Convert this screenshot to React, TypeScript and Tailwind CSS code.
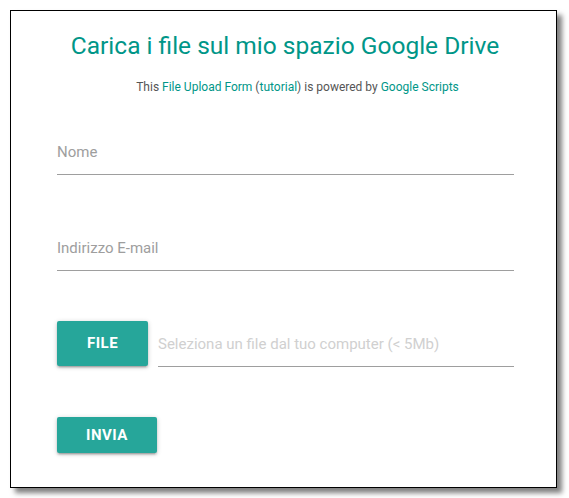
import React from "react";

const App: React.FC = () => {
  const handleSubmit = (e: React.FormEvent) => {
    e.preventDefault();
  };

  return (
    <div className="w-[569px] h-[498px] bg-white pt-[10px] pl-[10px] font-['Roboto',sans-serif]">
      <div className="w-[547px] h-[478px] bg-white border border-black shadow-[5px_5px_5px_rgba(0,0,0,0.5)] flex flex-col pt-[19px]">
        <h1 className="pl-[3px] text-[24.5px] leading-[32px] text-center text-[#009688]">
          Carica i file sul mio spazio Google Drive
        </h1>
        <p className="mt-[16px] pl-[28px] text-[12px] leading-[18px] text-center text-[#555]">
          This <a href="#" className="text-[#009688]">File Upload Form</a> (
          <a href="#" className="text-[#009688]">tutorial</a>) is powered by{" "}
          <a href="#" className="text-[#009688]">Google Scripts</a>
        </p>
        <form className="ml-[46px] w-[457px] flex flex-col" onSubmit={handleSubmit}>
          <input
            className="mt-[34px] h-[45px] w-full border-b border-[#9e9e9e] text-[15px] outline-none placeholder:text-[#9e9e9e]"
            placeholder="Nome"
            type="text"
          />
          <input
            className="mt-[51px] h-[45px] w-full border-b border-[#9e9e9e] text-[15px] outline-none placeholder:text-[#9e9e9e]"
            placeholder="Indirizzo E-mail"
            type="email"
          />
          <div className="mt-[50px] flex items-start">
            <button
              type="button"
              className="w-[91px] h-[45px] rounded-[2px] bg-[#26a69a] text-white text-[15px] font-bold tracking-[0.5px] shadow-[0_2px_2px_0_rgba(0,0,0,0.14),0_3px_1px_-2px_rgba(0,0,0,0.12),0_1px_5px_0_rgba(0,0,0,0.2)]"
            >
              FILE
            </button>
            <input
              className="ml-[10px] mt-px h-[45px] w-[356px] border-b border-[#9e9e9e] text-[15px] outline-none placeholder:text-[#d0d0d0]"
              placeholder="Seleziona un file dal tuo computer (< 5Mb)"
              type="text"
            />
          </div>
          <button
            type="submit"
            className="mt-[50px] w-[100px] h-[36px] rounded-[2px] bg-[#26a69a] text-white text-[15px] font-bold tracking-[0.5px] shadow-[0_2px_2px_0_rgba(0,0,0,0.14),0_3px_1px_-2px_rgba(0,0,0,0.12),0_1px_5px_0_rgba(0,0,0,0.2)]"
          >
            INVIA
          </button>
        </form>
      </div>
    </div>
  );
};

export default App;
